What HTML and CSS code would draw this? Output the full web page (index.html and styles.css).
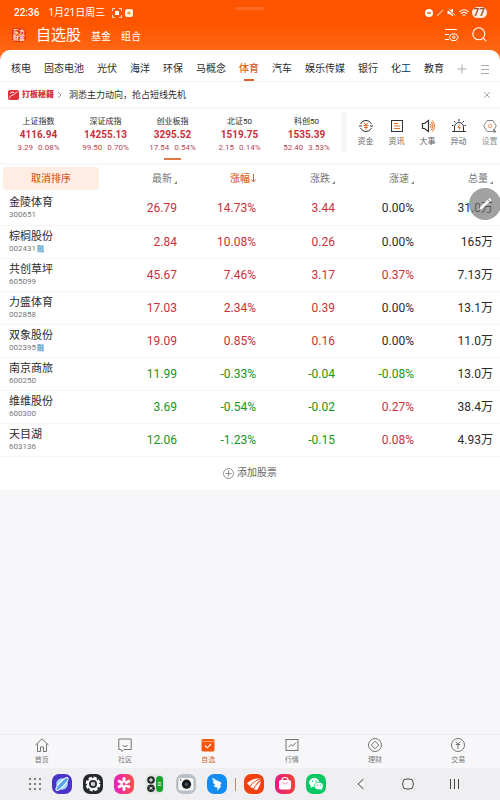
FILE: index.html
```html
<!DOCTYPE html>
<html lang="zh-CN">
<head>
    <meta charset="UTF-8">
    <meta name="viewport" content="width=device-width, initial-scale=1.0">
    <title>自选股</title>
    <link rel="stylesheet" href="styles.css">
</head>
<body>

    <header class="top">
        <div class="handle"></div>
        <div class="status">
            <span>22:36</span>
            <span class="date">1月21日周三</span>
            <svg width="10" height="10" viewBox="0 0 10 10" fill="none" stroke="#ffe2cc"><path d="M.5 3V.5H3M7 .5h2.500V3M9.500 7v2.500H7M3 9.500H.5V7"/><rect x="3" y="3" width="4" height="4" fill="#fff" stroke="none"/></svg>
            <svg width="8" height="8" viewBox="0 0 8 8"><rect width="8" height="8" rx="2" fill="#fff3d8"/><circle cx="4" cy="4" r="1.600" fill="#f59a3c"/></svg>
            <span class="space"></span>
            <svg width="8" height="8" viewBox="0 0 8 8"><circle cx="4" cy="4" r="4" fill="#fff"/><path d="M2 4h4" stroke="#ff5a05" stroke-width="1.400"/></svg>
            <svg width="8" height="8" viewBox="0 0 8 8"><path d="M1 7l6-6" stroke="#ffb27c" stroke-width="1.400"/></svg>
            <svg width="9" height="9" viewBox="0 0 9 9"><path d="M.5 3h2L6 .5v8L2.500 6h-2z" fill="#fff"/><path d="M1 1l7 7" stroke="#ff5a05" stroke-width="1.600"/><path d="M1.800.8l6.400 6.800" stroke="#fff" stroke-width=".9"/></svg>
            <svg width="10" height="8" viewBox="0 0 10 8" fill="none" stroke="#fff" stroke-width="1.100"><path d="M.5 2.800q4.500-4 9 0M2 4.700q3-2.600 6 0M3.600 6.400q1.400-1.200 2.800 0"/></svg>
            <span class="battery">77</span>
        </div>
        <div class="titlebar">
            <div class="logo"><span>东方</span><span>财富</span></div>
            <h1>自选股</h1>
            <a href="#">基金</a>
            <a href="#">组合</a>
            <span class="space"></span>
            <button aria-label="设置列表"><svg width="15" height="14" viewBox="0 0 15 14" fill="none" stroke="#fff" stroke-width="1"><path d="M1 1.500h12M1 6.500h4M1 11.500h4"/><path d="M7.500 6h4.500l2.200 3.200-2.200 3.300H7.500L5.300 9.200z"/><circle cx="9.800" cy="9.200" r="1.200"/></svg></button>
            <button aria-label="搜索"><svg width="15" height="15" viewBox="0 0 15 15" fill="none" stroke="#fff" stroke-width="1.100"><circle cx="6.800" cy="6.800" r="6"/><path d="M11.200 11.200l3 3"/></svg></button>
        </div>
    </header>

    <main>
        <div class="panel">
            <nav class="tabs">
                <a href="#">核电</a>
                <a href="#">固态电池</a>
                <a href="#">光伏</a>
                <a href="#">海洋</a>
                <a href="#">环保</a>
                <a href="#">马概念</a>
                <a href="#" class="active">体育</a>
                <a href="#">汽车</a>
                <a href="#">娱乐传媒</a>
                <a href="#">银行</a>
                <a href="#">化工</a>
                <a href="#">教育</a>
                <button aria-label="添加分组"><svg width="10" height="10" viewBox="0 0 10 10" stroke="#aaa"><path d="M5 .5v9M.5 5h9"/></svg></button>
                <button aria-label="分组菜单"><svg width="10" height="10" viewBox="0 0 10 10" stroke="#aaa"><path d="M1 1.500h8M1 5.500h8M1 9.500h8"/></svg></button>
            </nav>

            <div class="promo">
                <svg width="11" height="10" viewBox="0 0 11 10"><rect width="11" height="10" rx="2" fill="#e0303c"/><path d="M1.500 8C3 4 5 6 6.500 4S8 2.500 9.500 2M2 3.500Q4 1 6 2.500" fill="none" stroke="#fff"/></svg>
                <b>打板秘籍</b>
                <svg width="5" height="8" viewBox="0 0 5 8" fill="none" stroke="#999"><path d="M1 1l3 3-3 3"/></svg>
                <a href="#">洞悉主力动向，抢占短线先机</a>
                <span class="space"></span>
                <button aria-label="关闭"><svg width="8" height="8" viewBox="0 0 8 8" stroke="#aaa"><path d="M1 1l6 6M7 1L1 7"/></svg></button>
            </div>

            <div class="market">
                <div class="indices">
                    <div class="index"><span>上证指数</span><b>4116.94</b><small><i>3.29</i><i>0.08%</i></small></div>
                    <div class="index"><span>深证成指</span><b>14255.13</b><small><i>99.50</i><i>0.70%</i></small></div>
                    <div class="index current"><span>创业板指</span><b>3295.52</b><small><i>17.54</i><i>0.54%</i></small></div>
                    <div class="index"><span>北证50</span><b>1519.75</b><small><i>2.15</i><i>0.14%</i></small></div>
                    <div class="index"><span>科创50</span><b>1535.39</b><small><i>52.40</i><i>3.53%</i></small></div>
                </div>
                <div class="edge"></div>
                <div class="tools">
                    <button><svg width="14" height="14" viewBox="0 0 14 14" fill="none" stroke="#333"><path d="M1.500 5A6 6 0 0 1 12.500 5M12.500 9A6 6 0 0 1 1.500 9M0 7h3M11 7h3"/><path d="M5 4l2 2 2-2M4.500 6.500h5M5 8.500h4M7 6v4.500" stroke="#e8742c"/></svg>资金</button>
                    <button><svg width="14" height="14" viewBox="0 0 14 14" fill="none" stroke="#333"><rect x="1.500" y="1.500" width="11" height="11"/><path d="M4 4.500h4M4 7h6M4 9.500h6" stroke="#e8742c"/></svg>资讯</button>
                    <button><svg width="14" height="14" viewBox="0 0 14 14" fill="none" stroke="#333"><path d="M1.500 4.500h2L7.500 1.500v11L3.500 9.500h-2z" stroke-width="1.200"/><path d="M9.500 5q1.500 2 0 4M10.500 3q3 4 0 8M11.500 1.500q4 5.500 0 11" stroke="#e8742c"/></svg>大事</button>
                    <button><svg width="14" height="14" viewBox="0 0 14 14" fill="none" stroke="#333"><path d="M0 12.500h14M2.500 12V8a4.500 4.500 0 0 1 9 0v4M7 0v2.500M2 2l1.500 1.500M12 2l-1.500 1.500M0 6.500h1.500M12.500 6.500H14"/><path d="M7.500 5.500L6 8.500h2.200L7 11" stroke="#e8742c"/></svg>异动</button>
                    <button class="faded"><svg width="14" height="14" viewBox="0 0 14 14" fill="none" stroke="#555"><path d="M4 1.500h6L13.300 7 10 12.500H4L.7 7z"/><circle cx="7" cy="7" r="1.800" stroke="#e8742c"/><path d="M10.500 9.500v4.500l3-1z" fill="#444" stroke="none"/></svg>设置</button>
                </div>
            </div>
        </div>

        <table class="stocks">
            <thead>
                <tr>
                    <th class="name"><button class="cancel">取消排序</button></th>
                    <th>最新<i class="sort"></i></th>
                    <th class="active">涨幅<svg width="5" height="9" viewBox="0 0 5 9" fill="none" stroke="#d8622a"><path d="M2.500 0v8M.5 5.500l2 2.500 2-2.500"/></svg></th>
                    <th>涨跌<i class="sort"></i></th>
                    <th>涨速<i class="sort"></i></th>
                    <th>总量<i class="sort"></i></th>
                </tr>
            </thead>
            <tbody>
                <tr>
                    <td class="name"><b>金陵体育</b><small>300651</small></td>
                    <td class="up">26.79</td><td class="up">14.73%</td><td class="up">3.44</td><td>0.00%</td><td>31.0万</td>
                </tr>
                <tr>
                    <td class="name"><b>棕榈股份</b><small>002431<em>融</em></small></td>
                    <td class="up">2.84</td><td class="up">10.08%</td><td class="up">0.26</td><td>0.00%</td><td>165万</td>
                </tr>
                <tr>
                    <td class="name"><b>共创草坪</b><small>605099</small></td>
                    <td class="up">45.67</td><td class="up">7.46%</td><td class="up">3.17</td><td class="up">0.37%</td><td>7.13万</td>
                </tr>
                <tr>
                    <td class="name"><b>力盛体育</b><small>002858</small></td>
                    <td class="up">17.03</td><td class="up">2.34%</td><td class="up">0.39</td><td>0.00%</td><td>13.1万</td>
                </tr>
                <tr>
                    <td class="name"><b>双象股份</b><small>002395<em>融</em></small></td>
                    <td class="up">19.09</td><td class="up">0.85%</td><td class="up">0.16</td><td>0.00%</td><td>11.0万</td>
                </tr>
                <tr>
                    <td class="name"><b>南京商旅</b><small>600250</small></td>
                    <td class="down">11.99</td><td class="down">-0.33%</td><td class="down">-0.04</td><td class="down">-0.08%</td><td>13.0万</td>
                </tr>
                <tr>
                    <td class="name"><b>维维股份</b><small>600300</small></td>
                    <td class="down">3.69</td><td class="down">-0.54%</td><td class="down">-0.02</td><td class="up">0.27%</td><td>38.4万</td>
                </tr>
                <tr>
                    <td class="name"><b>天目湖</b><small>603136</small></td>
                    <td class="down">12.06</td><td class="down">-1.23%</td><td class="down">-0.15</td><td class="up">0.08%</td><td>4.93万</td>
                </tr>
            </tbody>
        </table>

        <button class="add">
            <svg width="11" height="11" viewBox="0 0 11 11" fill="none" stroke="#777" stroke-width=".8"><circle cx="5.500" cy="5.500" r="5"/><path d="M5.500 2.500v6M2.500 5.500h6"/></svg>
            添加股票
        </button>
    </main>

    <button class="float" aria-label="编辑"><svg width="14" height="14" viewBox="0 0 14 14" fill="#fff"><path d="M1 13l1.500-3.500L9.500 3l2 2-7 6.500z"/><path d="M10.300 2.200l1.200-1.100 1.900 1.900-1.200 1.200z"/></svg></button>

    <nav class="bottom">
        <a href="#"><svg width="14" height="14" viewBox="0 0 14 14" fill="none" stroke="#666" stroke-width=".9"><path d="M.5 7L7 .8 13.500 7M2.500 5.500v8h3V9h3v4.500h3v-8"/></svg>首页</a>
        <a href="#"><svg width="14" height="14" viewBox="0 0 14 14" fill="none" stroke="#666" stroke-width=".9"><path d="M.8 1h12.400v10.500H6l-2 2-1-2H.8z"/><path d="M4.500 7.500q2.500 2 5 0"/></svg>社区</a>
        <a href="#" class="active"><svg width="14" height="14" viewBox="0 0 14 14"><rect x=".5" y="1" width="13" height="12.500" rx="1.500" fill="#f4560c"/><path d="M1 3.500h12" stroke="#ffb184" stroke-width=".8"/><path d="M4 7.500l2.300 2.300L10 6" fill="none" stroke="#fff" stroke-width="1.100"/></svg>自选</a>
        <a href="#"><svg width="14" height="14" viewBox="0 0 14 14" fill="none" stroke="#666" stroke-width=".9"><rect x="1" y="1.500" width="12" height="11"/><path d="M3.500 9L6 6.500l1.800 1.500L11 4.500"/></svg>行情</a>
        <a href="#"><svg width="14" height="14" viewBox="0 0 14 14" fill="none" stroke="#666" stroke-width=".9"><circle cx="7" cy="7" r="6.500"/><path d="M7 3.200L10.800 7 7 10.800 3.200 7z"/></svg>理财</a>
        <a href="#"><svg width="14" height="14" viewBox="0 0 14 14" fill="none" stroke="#666" stroke-width=".9"><circle cx="7" cy="7" r="6.500"/><path d="M4.800 3.500L7 6.200l2.200-2.700M4.800 6.500h4.400M7 6.200v4.800"/></svg>交易</a>
    </nav>

    <footer class="dock">
        <div class="apps">
            <button aria-label="所有应用"><svg width="14" height="20" viewBox="0 0 14 20" fill="#555"><circle cx="2" cy="5" r="1"/><circle cx="7" cy="5" r="1"/><circle cx="12" cy="5" r="1"/><circle cx="2" cy="10" r="1"/><circle cx="7" cy="10" r="1"/><circle cx="12" cy="10" r="1"/><circle cx="2" cy="15" r="1"/><circle cx="7" cy="15" r="1"/><circle cx="12" cy="15" r="1"/></svg></button>
            <button aria-label="浏览器"><svg width="20" height="20" viewBox="0 0 20 20"><rect width="20" height="20" rx="7" fill="#4a35c8"/><circle cx="10" cy="10" r="5.800" fill="#a4d8fa"/><ellipse cx="10" cy="10" rx="8.500" ry="2.400" transform="rotate(-47 10 10)" fill="#5aa5ee" stroke="#fff"/></svg></button>
            <button aria-label="设置"><svg width="20" height="20" viewBox="0 0 20 20"><rect width="20" height="20" rx="7" fill="#24272d"/><circle cx="10" cy="10" r="6.300" fill="none" stroke="#fff" stroke-width="2.200" stroke-dasharray="3.300 1.600"/><circle cx="10" cy="10" r="5" fill="none" stroke="#fff" stroke-width="2"/><circle cx="10" cy="10" r="2.300" fill="#ccc"/></svg></button>
            <button aria-label="相册"><svg width="20" height="20" viewBox="0 0 20 20"><defs><linearGradient id="pink" x2="1"><stop stop-color="#e51fc0"/><stop offset="1" stop-color="#fb5147"/></linearGradient></defs><rect width="20" height="20" rx="7" fill="url(#pink)"/><path d="M10 4.500v11M5.200 7.200l9.600 5.600M14.800 7.200l-9.600 5.600" stroke="#fff" stroke-width="3" stroke-linecap="round"/><circle cx="10" cy="10" r="1.400" fill="#f04080"/></svg></button>
            <button aria-label="计算器"><svg width="20" height="20" viewBox="0 0 20 20"><rect width="20" height="20" rx="7" fill="#e4e6e4"/><circle cx="6" cy="6" r="3.800" fill="#26292b"/><circle cx="6" cy="14.300" r="3.800" fill="#26292b"/><rect x="11" y="2" width="7" height="16" rx="3.500" fill="#16a52a"/><path d="M4 6h4M6 4v4M4.500 12.800l3 3M7.500 12.800l-3 3M12.800 8.800h3.400M12.800 11.200h3.400" stroke="#fff"/></svg></button>
            <button aria-label="相机"><svg width="20" height="20" viewBox="0 0 20 20"><rect width="20" height="20" rx="7" fill="#b9bfc6"/><rect x="2.500" y="4" width="15" height="12.500" rx="2.500" fill="#f7f7f7"/><circle cx="10.500" cy="10.200" r="4.600" fill="#17191c"/><circle cx="10.500" cy="10.200" r="1.800" fill="#46515e"/><circle cx="4.700" cy="6" r=".8" fill="#555"/></svg></button>
            <button aria-label="钉钉"><svg width="20" height="20" viewBox="0 0 20 20"><rect width="20" height="20" rx="7" fill="#138df2"/><path d="M5 3.500q4 3 8.500 4.500 1.300.5.600 2L12.800 12h1.700L10 17l.8-3.500H9Q7 12.500 6.700 11l2 .2Q5.500 9 5.600 7l2.500.8Q5 6 5 3.500z" fill="#fff"/></svg></button>
        </div>
        <div class="line"></div>
        <div class="apps">
            <button aria-label="东方财富"><svg width="20" height="20" viewBox="0 0 20 20"><rect width="20" height="20" rx="7" fill="#f5400e"/><path d="M3 9q5-4.500 13.500-5Q11 6 5.500 12zM6 13q4-6 11-8-4.500 3.500-7.500 9.500zM10 15.500Q13 9 17 7q-1 5-4 9z" fill="#fff"/></svg></button>
            <button aria-label="应用商店"><svg width="20" height="20" viewBox="0 0 20 20"><defs><linearGradient id="shop" x2="1"><stop stop-color="#e51a85"/><stop offset="1" stop-color="#ee4438"/></linearGradient></defs><rect width="20" height="20" rx="7" fill="url(#shop)"/><rect x="4" y="6" width="12" height="9.500" rx="2" fill="#fff"/><path d="M7 8V6a3 2.500 0 0 1 6 0v2" fill="none" stroke="#fff" stroke-width="1.200"/><path d="M7.500 8a2.500 2 0 0 0 5 0" fill="none" stroke="#f08aa8" stroke-width=".8"/></svg></button>
            <button aria-label="微信"><svg width="20" height="20" viewBox="0 0 20 20"><rect width="20" height="20" rx="7" fill="#08c866"/><ellipse cx="8.200" cy="8.500" rx="5.200" ry="4.400" fill="#fff"/><path d="M5 11l-.5 3 3-1.500z" fill="#fff"/><ellipse cx="12.800" cy="12" rx="4.400" ry="3.700" fill="#fff" stroke="#08c866" stroke-width=".7"/><path d="M14 15l2 1.200-.3-2z" fill="#fff"/><g fill="#08c866"><circle cx="6.500" cy="7.300" r=".7"/><circle cx="10" cy="7.300" r=".7"/><circle cx="11.400" cy="11.200" r=".6"/><circle cx="14.200" cy="11.200" r=".6"/></g></svg></button>
        </div>
        <div class="keys">
            <button aria-label="返回"><svg width="12" height="12" viewBox="0 0 12 12" fill="none" stroke="#444"><path d="M8.500 1L3 6l5.500 5"/></svg></button>
            <button aria-label="主页"><svg width="12" height="12" viewBox="0 0 12 12" fill="none" stroke="#444"><rect x=".8" y="1" width="10.400" height="10" rx="3.500"/></svg></button>
            <button aria-label="最近"><svg width="12" height="12" viewBox="0 0 12 12" fill="none" stroke="#444"><path d="M1.500 1v10M5.500 1v10M9.500 1v10"/></svg></button>
        </div>
    </footer>

</body>
</html>
```

FILE: styles.css
```css
* {
    margin: 0;
    padding: 0;
    box-sizing: border-box;
}
body {
    display: flex;
    flex-direction: column;
    min-height: 100vh;
    position: relative;
    background: #f7f7f9;
    color: #2c2c2c;
    font-family: Roboto, "Noto Sans CJK SC", sans-serif;
    font-size: 10px;
    line-height: 14px;
}
a {
    color: inherit;
    text-decoration: none;
}
button {
    display: inline-flex;
    align-items: center;
    justify-content: center;
    border: none;
    background: none;
    color: inherit;
    font: inherit;
    cursor: pointer;
}
svg {
    display: block;
    flex-shrink: 0;
}
i, em {
    font-style: normal;
}
.space {
    flex: 1;
}

/* Orange header */
.top {
    background: linear-gradient(#ff5500 40%, #ff6f1c);
    color: #fff;
    padding: 5px 13px 12px 12px;
    margin-bottom: -10px;
}
.handle {
    position: absolute;
    top: 7px;
    left: 47%;
    width: 6%;
    height: 3px;
    border-radius: 2px;
    background: #ff6a22;
}
.status {
    display: flex;
    align-items: center;
    gap: 3px;
    height: 15px;
    padding-left: 2px;
    font-weight: 500;
}
.date {
    margin: 0 4px 0 6px;
    font-weight: 400;
}
.battery {
    padding: 0 2px;
    border-radius: 6px;
    background: #ffeee2;
    color: #9c5230;
    line-height: 11px;
    font-weight: 700;
}
.titlebar {
    display: flex;
    align-items: center;
    gap: 10px;
    height: 30px;
    padding-bottom: 1px;
}
.logo {
    display: flex;
    flex-direction: column;
    align-items: center;
    width: 14px;
    padding: 1px 0;
    border-radius: 3px;
    background: #e83c0c;
    font-size: 6px;
    line-height: 6px;
    font-weight: 500;
}
.titlebar h1 {
    font-size: 15px;
    font-weight: 400;
    line-height: 20px;
}
.titlebar a {
    padding-top: 4px;
}
.titlebar button {
    margin-left: 3px;
}

/* Group tabs */
.panel {
    background: #fff;
    border-radius: 10px 10px 0 0;
}
.top + main {
    margin-top: -2px;
}
.tabs {
    display: flex;
    justify-content: space-between;
    height: 32px;
    padding: 0 10px 0 11px;
    border-bottom: 1px solid #f3f3f3;
}
.tabs a {
    padding-top: 12px;
}
.tabs button {
    padding-top: 6px;
}
.tabs .active {
    color: #d8622a;
    font-weight: 500;
    background: linear-gradient(#d8622a, #d8622a) center bottom / 10px 2px no-repeat;
}
.promo {
    display: flex;
    align-items: center;
    gap: 3px;
    height: 27px;
    padding: 0 9px 0 8px;
    border-bottom: 2px solid #f8f8fa;
    font-size: 9px;
}
.promo b {
    color: #d8323e;
    font-size: 8px;
    font-weight: 900;
}
.promo a {
    margin-left: 4px;
}

/* Market indices and shortcuts */
.market {
    display: flex;
    height: 56px;
    border-bottom: 2px solid #f7f7f9;
}
.indices {
    display: flex;
    flex: 0 0 68%;
    padding-left: 5px;
}
.index {
    display: flex;
    flex: 1;
    flex-direction: column;
    align-items: center;
    padding-top: 7px;
}
.index span {
    font-size: 8px;
    line-height: 12px;
}
.index b {
    color: #c8303c;
    font-size: 10px;
    font-weight: 700;
    line-height: 14px;
}
.index small {
    display: flex;
    gap: 5px;
    color: #b84650;
    font-size: 8px;
    line-height: 12px;
}
.current {
    background: linear-gradient(#e07a48, #e07a48) center 49px / 17px 2px no-repeat;
}
.edge {
    width: 6px;
    height: 39px;
    margin: 4px 3px 0 1px;
    background: #f6f6f7;
}
.tools {
    display: flex;
    flex: 1;
    overflow: hidden;
}
.tools button {
    flex: 0 0 31px;
    flex-direction: column;
    justify-content: flex-start;
    gap: 4px;
    padding-top: 10px;
    color: #666;
    font-size: 8px;
    line-height: 10px;
}
.tools .faded {
    opacity: 0.7;
}

/* Stock table */
.stocks {
    width: 100%;
    table-layout: fixed;
    border-collapse: collapse;
    background: #fff;
}
.stocks th, .stocks td {
    width: 15.8%;
    padding-right: 7px;
    text-align: right;
    white-space: nowrap;
}
.stocks th {
    height: 27px;
    color: #777;
    font-size: 10px;
    font-weight: 400;
}
.stocks td {
    height: 33px;
    font-size: 12px;
    border-bottom: 1px solid #f7f7f7;
}
.stocks .name {
    width: 21%;
    padding: 0 0 0 9px;
    text-align: left;
}
.stocks th.name {
    padding: 0 6px 0 3px;
}
.stocks .active {
    color: #d8622a;
    font-weight: 500;
}
.stocks th svg {
    display: inline-block;
    margin-left: 1px;
    vertical-align: -1px;
}
.sort {
    display: inline-block;
    margin-left: 2px;
    border-bottom: 3px solid #888;
    border-left: 3px solid transparent;
    vertical-align: -2px;
}
.cancel {
    width: 100%;
    height: 23px;
    border-radius: 3px;
    background: #ffede4;
    color: #d8622a;
    font-weight: 500;
}
.name b {
    display: block;
    font-size: 11px;
    font-weight: 400;
    line-height: 14px;
}
.name small {
    display: flex;
    align-items: center;
    gap: 1px;
    color: #777;
    font-size: 8px;
    line-height: 10px;
}
.name em {
    background: #d5eaf6;
    color: #3c8fc0;
    font-size: 7px;
    line-height: 8px;
}
.stocks .up {
    color: #c8303c;
}
.stocks .down {
    color: #14961c;
}
.add {
    display: flex;
    width: 100%;
    height: 33px;
    gap: 3px;
    background: #fff;
    color: #666;
}
.float {
    position: absolute;
    top: 188px;
    right: -1px;
    width: 32px;
    height: 32px;
    border-radius: 50%;
    background: rgba(110, 110, 110, 0.65);
}

/* App navigation */
.bottom {
    display: flex;
    height: 34px;
    margin-top: auto;
    border-top: 1px solid #eeeef0;
}
.bottom a {
    display: flex;
    flex: 1;
    flex-direction: column;
    align-items: center;
    gap: 3px;
    padding-top: 3px;
    color: #777;
    font-size: 7px;
    line-height: 10px;
}
.bottom .active {
    color: #d8622a;
}

/* System dock */
.dock {
    display: flex;
    align-items: center;
    height: 32px;
    padding: 0 22px 0 28px;
    background: #efeff1;
}
.apps {
    display: flex;
    gap: 11px;
}
.apps:first-child button:first-child {
    margin-right: -1px;
}
.line {
    width: 1px;
    height: 13px;
    margin: 0 8px;
    background: #c98a62;
}
.keys {
    display: flex;
    flex: 1;
    justify-content: flex-end;
}
.keys button {
    width: 47px;
    height: 32px;
}
```
